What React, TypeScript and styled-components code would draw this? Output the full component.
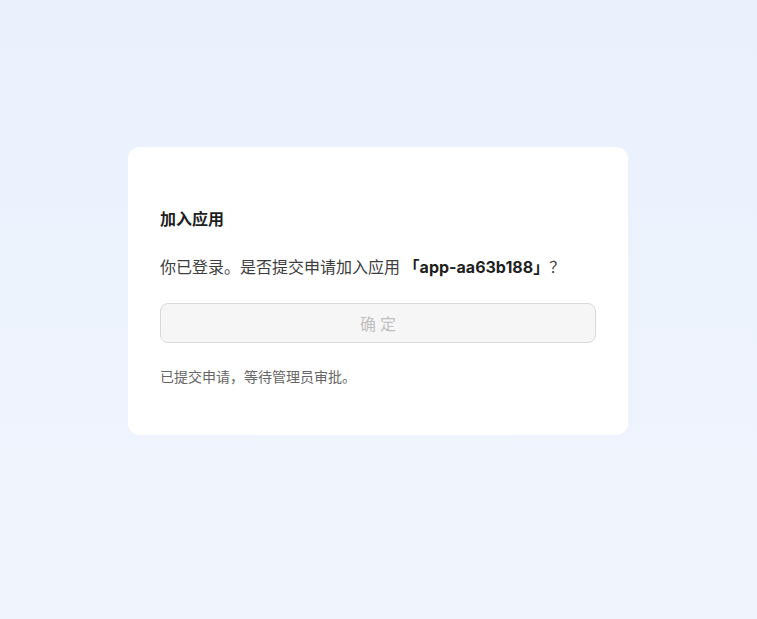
import styled, { createGlobalStyle } from "styled-components";

const GlobalStyle = createGlobalStyle`
    html, body {
        margin: 0;
        padding: 0;
    }
    body {
        font-family: "Inter", "Liberation Sans", "Noto Sans CJK SC", sans-serif;
        -webkit-font-smoothing: antialiased;
    }
`;

const Page = styled.div`
    width: 100%;
    min-height: 100vh;
    display: flex;
    justify-content: center;
    align-items: flex-start;
    padding: 147px 1px 0 0;
    box-sizing: border-box;
    background: linear-gradient(180deg, #eaf1fd 0%, #f0f5fd 100%);
`;

const Card = styled.div`
    width: 500px;
    box-sizing: border-box;
    background: #ffffff;
    border-radius: 12px;
    padding: 59px 32px 48px;
    display: flex;
    flex-direction: column;
`;

const Title = styled.div`
    font-size: 16px;
    font-weight: 700;
    color: #1f1f1f;
    line-height: 24px;
    font-family: "Noto Sans CJK SC", sans-serif;
    margin-bottom: 24px;
`;

const Message = styled.div`
    font-size: 16px;
    color: #3d3d3d;
    line-height: 24px;
    font-family: "Noto Sans CJK SC", sans-serif;
    margin-bottom: 24px;
`;

const AppName = styled.span`
    font-weight: 700;
    color: #1f1f1f;
    font-family: "Inter", "Noto Sans CJK SC", sans-serif;
`;

const ConfirmButton = styled.button`
    height: 40px;
    width: 100%;
    border: 1px solid #d9d9d9;
    border-radius: 8px;
    background: #f6f6f6;
    color: #bfbfbf;
    font-size: 16px;
    letter-spacing: 4px;
    padding: 0 0 0 4px;
    font-family: "Noto Sans CJK SC", sans-serif;
    cursor: not-allowed;
    margin-bottom: 22px;
`;

const Hint = styled.div`
    font-size: 14px;
    color: #666666;
    line-height: 22px;
    font-family: "Noto Sans CJK SC", sans-serif;
`;

export default function App() {
    const appId = "app-aa63b188";
    return (
        <>
            <GlobalStyle />
            <Page>
                <Card>
                    <Title>加入应用</Title>
                    <Message>
                        你已登录。是否提交申请加入应用 <AppName>「{appId}」</AppName>？
                    </Message>
                    <ConfirmButton disabled>确定</ConfirmButton>
                    <Hint>已提交申请，等待管理员审批。</Hint>
                </Card>
            </Page>
        </>
    );
}
